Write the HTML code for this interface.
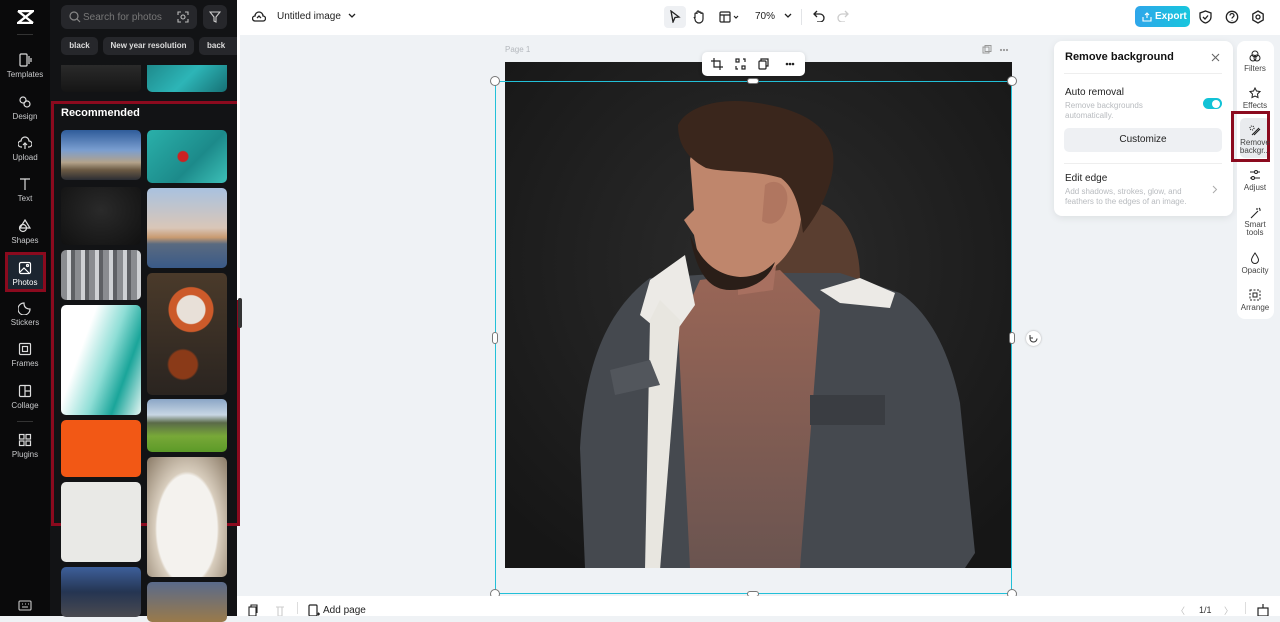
<!DOCTYPE html>
<html><head><meta charset="utf-8"><style>
*{box-sizing:border-box;margin:0;padding:0}
body{width:1280px;height:616px;overflow:hidden;font-family:"Liberation Sans",sans-serif;background:#eff2f5;position:relative}
.abs{position:absolute}
.rail{left:0;top:0;width:50px;height:616px;background:#0a0a0b}
.ri{position:absolute;left:0;width:50px;text-align:center;color:#c9cacc;font-size:8px}
.ri svg{display:block;margin:0 auto 3px}
.panel{left:50px;top:0;width:187px;height:616px;background:#121315}
.th{position:absolute;border-radius:5px;overflow:hidden}
.tb{position:absolute;color:#444;font-size:8px;text-align:center;width:40px}
.tb svg{display:block;margin:0 auto 2px}
</style></head><body>
<div class="abs rail">
 <svg class="abs" style="left:17px;top:10px" width="17" height="14" viewBox="0 0 17 14"><path d="M1 1h15L1 13h15M1 1l15 12" stroke="#fff" stroke-width="2.4" fill="none"/></svg>
 <div class="abs" style="left:17px;top:34px;width:16px;height:1px;background:#333"></div>
 <div class="ri" style="top:53px"><svg width="14" height="14" viewBox="0 0 14 14" fill="none" stroke="#ddd" stroke-width="1.2"><rect x="2" y="1" width="7" height="12" rx="1"/><path d="M11 3v8M13 5v4"/></svg>Templates</div>
 <div class="ri" style="top:95px"><svg width="14" height="14" viewBox="0 0 14 14" fill="none" stroke="#ddd" stroke-width="1.2"><circle cx="5" cy="5" r="3"/><circle cx="9" cy="9" r="3"/></svg>Design</div>
 <div class="ri" style="top:136px"><svg width="14" height="14" viewBox="0 0 14 14" fill="none" stroke="#ddd" stroke-width="1.2"><path d="M4 11H3a3 3 0 010-6 4 4 0 018 0 3 3 0 010 6h-1M7 13V7M5 9l2-2 2 2"/></svg>Upload</div>
 <div class="ri" style="top:177px"><svg width="14" height="14" viewBox="0 0 14 14" fill="none" stroke="#ddd" stroke-width="1.2"><path d="M2 2h10M7 2v11"/></svg>Text</div>
 <div class="ri" style="top:219px"><svg width="14" height="14" viewBox="0 0 14 14" fill="none" stroke="#ddd" stroke-width="1.2"><path d="M7 1l5 8H2z"/><circle cx="5" cy="9" r="3.5"/></svg>Shapes</div>
 <div class="abs" style="left:5px;top:252px;width:41px;height:40px;border:3px solid #8b0a1e;background:#1c2530"></div>
 <div class="ri" style="top:261px;color:#fff"><svg width="14" height="14" viewBox="0 0 14 14" fill="none" stroke="#fff" stroke-width="1.2"><rect x="1.5" y="1.5" width="11" height="11" rx="1.5"/><path d="M2 11l4-4 5 5"/><circle cx="9.5" cy="4.5" r="1"/></svg>Photos</div>
 <div class="ri" style="top:301px"><svg width="14" height="14" viewBox="0 0 14 14" fill="none" stroke="#ddd" stroke-width="1.2"><path d="M12 8A6 6 0 116 2c0 4 2 6 6 6z"/></svg>Stickers</div>
 <div class="ri" style="top:342px"><svg width="14" height="14" viewBox="0 0 14 14" fill="none" stroke="#ddd" stroke-width="1.2"><rect x="1.5" y="1.5" width="11" height="11" rx="1"/><rect x="4.5" y="4.5" width="5" height="5"/></svg>Frames</div>
 <div class="ri" style="top:384px"><svg width="14" height="14" viewBox="0 0 14 14" fill="none" stroke="#ddd" stroke-width="1.2"><rect x="1.5" y="1.5" width="11" height="11" rx="1"/><path d="M7 1.5v11M7 7h5.5"/></svg>Collage</div>
 <div class="abs" style="left:17px;top:421px;width:16px;height:1px;background:#333"></div>
 <div class="ri" style="top:433px"><svg width="14" height="14" viewBox="0 0 14 14" fill="none" stroke="#ddd" stroke-width="1.2"><rect x="1.5" y="1.5" width="4.5" height="4.5"/><rect x="8" y="1.5" width="4.5" height="4.5"/><rect x="1.5" y="8" width="4.5" height="4.5"/><rect x="8" y="8" width="4.5" height="4.5"/></svg>Plugins</div>
 <svg class="abs" style="left:18px;top:600px" width="14" height="12" viewBox="0 0 14 12" fill="none" stroke="#ccc" stroke-width="1.1"><rect x="1" y="1" width="12" height="9" rx="1"/><path d="M4 7h6M4 4h1M7 4h1M10 4h1"/></svg>
</div>
<div class="abs panel">
 <div class="abs" style="left:11px;top:5px;width:136px;height:24px;background:#26272b;border-radius:6px"></div>
 <svg class="abs" style="left:19px;top:11px" width="12" height="12" viewBox="0 0 12 12" fill="none" stroke="#888" stroke-width="1.2"><circle cx="5" cy="5" r="4"/><path d="M8 8l3 3"/></svg>
 <div class="abs" style="left:33px;top:12px;color:#777;font-size:10px">Search for photos</div>
 <svg class="abs" style="left:127px;top:11px" width="12" height="12" viewBox="0 0 12 12" fill="none" stroke="#bbb" stroke-width="1.1"><path d="M1 4V1h3M8 1h3v3M11 8v3H8M4 11H1V8"/><circle cx="6" cy="6" r="2"/></svg>
 <div class="abs" style="left:153px;top:5px;width:24px;height:24px;background:#26272b;border-radius:6px"></div>
 <svg class="abs" style="left:159px;top:11px" width="12" height="12" viewBox="0 0 12 12" fill="none" stroke="#ccc" stroke-width="1.1"><path d="M1 1h10L7 6v5L5 10V6z"/></svg>
 <div class="abs" style="left:11px;top:37px;width:37px;height:18px;background:#26272b;border-radius:5px;color:#ddd;font-size:8px;font-weight:bold;text-align:center;line-height:18px">black</div>
 <div class="abs" style="left:53px;top:37px;width:91px;height:18px;background:#26272b;border-radius:5px;color:#ddd;font-size:8px;font-weight:bold;text-align:center;line-height:18px">New year resolution</div>
 <div class="abs" style="left:149px;top:37px;width:38px;height:18px;background:#26272b;border-radius:5px 0 0 5px;color:#ddd;font-size:8px;font-weight:bold;line-height:18px;padding-left:8px;overflow:hidden">back</div>
 <div class="th" style="left:11px;top:65px;width:80px;height:27px;background:linear-gradient(#2a2a2a,#151515);border-radius:0 0 5px 5px"></div>
 <div class="th" style="left:97px;top:65px;width:80px;height:27px;background:linear-gradient(135deg,#1e8a8c,#2db5b7,#167074);border-radius:0 0 5px 5px"></div>
 <div class="abs" style="left:1px;top:101px;width:189px;height:425px;border:3px solid #8b0a1e"></div>
 <div class="abs" style="left:11px;top:107px;color:#fff;font-size:11px;font-weight:bold">Recommended</div>
 <div class="th" style="left:11px;top:130px;width:80px;height:50px;background:linear-gradient(#2f5c9a 0%,#7a9ed0 40%,#b3a28a 65%,#6b5a44 80%,#2b2d33)"></div>
 <div class="th" style="left:11px;top:187px;width:80px;height:58px;background:radial-gradient(ellipse at 50% 40%,#2a2a2a,#111)"></div>
 <div class="th" style="left:11px;top:250px;width:80px;height:50px;background:repeating-linear-gradient(90deg,#8a8c90 0 6px,#cfd1d4 6px 10px,#5e6064 10px 14px)"></div>
 <div class="th" style="left:11px;top:305px;width:80px;height:110px;background:linear-gradient(110deg,#fff 30%,#8fded6 55%,#1aa59a 75%,#e6f6f4)"></div>
 <div class="th" style="left:11px;top:420px;width:80px;height:57px;background:#f25815"></div>
 <div class="th" style="left:11px;top:482px;width:80px;height:80px;background:#e9e9e6"></div>
 <div class="th" style="left:11px;top:567px;width:80px;height:50px;background:linear-gradient(#3d5f9a,#253552 50%,#4a4a50)"></div>
 <div class="th" style="left:97px;top:130px;width:80px;height:53px;background:radial-gradient(circle at 45% 50%,#c22 0 5px,transparent 6px),linear-gradient(135deg,#2ab0aa,#1c8a8a 60%,#3dc0b8)"></div>
 <div class="th" style="left:97px;top:188px;width:80px;height:80px;background:linear-gradient(#a9c2e0 0%,#d9c6b8 50%,#c89a70 62%,#5a6a80 70%,#3a5a88 100%)"></div>
 <div class="th" style="left:97px;top:273px;width:80px;height:122px;background:radial-gradient(circle at 55% 30%,#e8e0d8 0 14px,#cc5a2a 15px 22px,transparent 23px),radial-gradient(circle at 45% 75%,#8a3a18 0 14px,transparent 16px),linear-gradient(#4a3a2a,#2a2420)"></div>
 <div class="th" style="left:97px;top:399px;width:80px;height:53px;background:linear-gradient(#8aa6c6 0%,#c8d6e4 30%,#5a6a48 45%,#78a838 70%,#5c9a28)"></div>
 <div class="th" style="left:97px;top:457px;width:80px;height:120px;background:radial-gradient(ellipse at 50% 60%,#f4f2ee 0 30px,#d8cdbd 32px,#8a7a66)"></div>
 <div class="th" style="left:97px;top:582px;width:80px;height:40px;background:linear-gradient(#5a6a8a,#9a7a4a)"></div>
 <div class="abs" style="left:187px;top:0;width:3px;height:300px;background:#fff"></div>
 <div class="abs" style="left:188px;top:298px;width:4px;height:30px;background:#333;border-radius:2px"></div>
</div>
<!-- top bar -->
<div class="abs" style="left:237px;top:0;width:1043px;height:35px;background:#fff"></div>
<svg class="abs" style="left:252px;top:10px" width="14" height="13" viewBox="0 0 14 13" fill="none" stroke="#222" stroke-width="1.3"><path d="M4 11H3a2.5 2.5 0 010-5 4 4 0 018 0 2.5 2.5 0 010 5H4z"/><path d="M5 8l2-2 2 2"/></svg>
<div class="abs" style="left:277px;top:11px;font-size:10px;color:#222">Untitled image</div>
<svg class="abs" style="left:348px;top:13px" width="8" height="6" viewBox="0 0 8 6"><path d="M1 1l3 3 3-3" stroke="#222" stroke-width="1.3" fill="none"/></svg>
<div class="abs" style="left:664px;top:6px;width:22px;height:22px;background:#eef0f3;border-radius:4px"></div>
<svg class="abs" style="left:669px;top:10px" width="12" height="13" viewBox="0 0 12 13"><path d="M2 1l8 6-4 .5L4 12z" stroke="#222" stroke-width="1.3" fill="none"/></svg>
<svg class="abs" style="left:692px;top:10px" width="13" height="14" viewBox="0 0 13 14" fill="none" stroke="#222" stroke-width="1.2"><path d="M3 8V4a1 1 0 012 0V2a1 1 0 012 0v1a1 1 0 012 0v1a1 1 0 012 0v5a4 4 0 01-8 0L2 7"/></svg>
<svg class="abs" style="left:719px;top:11px" width="22" height="12" viewBox="0 0 22 12" fill="none" stroke="#222" stroke-width="1.2"><rect x="1" y="1" width="10" height="10" rx="1"/><path d="M1 4h10M5 4v7M15 5l2 2 2-2"/></svg>
<div class="abs" style="left:755px;top:11px;font-size:10px;color:#222">70%</div>
<svg class="abs" style="left:784px;top:13px" width="8" height="6" viewBox="0 0 8 6"><path d="M1 1l3 3 3-3" stroke="#222" stroke-width="1.3" fill="none"/></svg>
<div class="abs" style="left:801px;top:9px;width:1px;height:16px;background:#e2e4e7"></div>
<svg class="abs" style="left:813px;top:10px" width="12" height="12" viewBox="0 0 12 12" fill="none" stroke="#222" stroke-width="1.3"><path d="M4 1L1 4l3 3M1 4h6a4 4 0 010 8H4"/></svg>
<svg class="abs" style="left:837px;top:10px" width="12" height="12" viewBox="0 0 12 12" fill="none" stroke="#ccc" stroke-width="1.3"><path d="M8 1l3 3-3 3M11 4H5a4 4 0 000 8h3"/></svg>
<div class="abs" style="left:1135px;top:6px;width:55px;height:21px;border-radius:5px;background:linear-gradient(90deg,#2fa6ea,#17c6dd);color:#fff;font-size:10px;font-weight:bold;line-height:21px;padding-left:20px">Export</div>
<svg class="abs" style="left:1142px;top:12px" width="10" height="10" viewBox="0 0 10 10" fill="none" stroke="#fff" stroke-width="1.1"><path d="M1 5v4h8V5M5 6V1M3 3l2-2 2 2"/></svg>
<svg class="abs" style="left:1199px;top:10px" width="13" height="14" viewBox="0 0 13 14" fill="none" stroke="#222" stroke-width="1.3"><path d="M6.5 1L12 3v4c0 3-3 5.5-5.5 6C4 12.5 1 10 1 7V3z"/><path d="M4 7l2 2 3-3.5"/></svg>
<svg class="abs" style="left:1225px;top:10px" width="14" height="14" viewBox="0 0 14 14" fill="none" stroke="#222" stroke-width="1.3"><circle cx="7" cy="7" r="5.7"/><path d="M5 5.5a2 2 0 114 0c0 1.5-2 1.5-2 3M7 10.5v.5"/></svg>
<svg class="abs" style="left:1251px;top:10px" width="14" height="14" viewBox="0 0 14 14" fill="none" stroke="#222" stroke-width="1.3"><path d="M7 1l5.2 3v6L7 13 1.8 10V4z"/><circle cx="7" cy="7" r="2"/></svg>
<!-- canvas -->
<div class="abs" style="left:505px;top:45px;font-size:8px;color:#b4b8bd">Page 1</div>
<svg class="abs" style="left:982px;top:45px" width="30" height="10" viewBox="0 0 30 10" fill="none" stroke="#999" stroke-width="1"><rect x="1" y="2" width="6" height="6"/><rect x="3" y="0.5" width="6" height="6"/><circle cx="19" cy="5" r=".6" fill="#999"/><circle cx="22" cy="5" r=".6" fill="#999"/><circle cx="25" cy="5" r=".6" fill="#999"/></svg>
<svg class="abs" style="left:505px;top:62px" width="507" height="506" viewBox="505 62 507 506">
 <defs><radialGradient id="bg" cx="50%" cy="40%" r="70%"><stop offset="0" stop-color="#2c2c2c"/><stop offset="1" stop-color="#161616"/></radialGradient>
 <linearGradient id="hd" x1="0" y1="0" x2="0" y2="1"><stop offset="0" stop-color="#9a6656"/><stop offset="1" stop-color="#6a5450"/></linearGradient></defs>
 <rect x="505" y="62" width="507" height="506" fill="url(#bg)"/>
 <path d="M800 200c35 0 60 30 60 80l-10 30-90-20z" fill="#5a3e30"/>
 <path d="M585 568l-5-120c5-90 30-140 70-170l80-5 110 0 60 20c30 20 50 60 60 110l15 150-10 15z" fill="#45494f"/>
 <path d="M700 280l80-10 40 40-20 258H690l-12-240z" fill="url(#hd)"/>
 <path d="M650 280l35-25 10 50-25 35-30-25zM820 290l40-12 35 15-5 15-50-5z" fill="#eceae6"/>
 <path d="M660 300l20 20-20 250h-15l5-250z" fill="#e8e6e0"/>
 <path d="M810 395h75v30h-75z" fill="#3a3d42"/>
 <path d="M610 370l40-10 10 25-45 10z" fill="#52565c"/>
 <path d="M738 250l40 0 -5 40-35 5z" fill="#a87060"/>
 <path d="M690 160c2-10 10-15 20-15l80 10c15 15 15 45 10 70-5 25-25 50-55 55-25 3-40-10-48-30l-3-15-10-15 10-10z" fill="#bf866c"/>
 <path d="M690 235c10 25 25 40 50 42 15 0 25-5 35-15-5 15-20 28-45 28-25 0-35-25-40-55z" fill="#2a1e18"/>
 <path d="M678 125c10-20 45-28 80-22 40 6 70 20 75 50 3 25-10 55-30 80-3-25-8-45-22-55-25-8-55-5-75-10-15-8-28-20-28-43z" fill="#3a261c"/>
 <path d="M765 185c10-8 25 0 22 18-3 18-15 25-25 18z" fill="#b07660"/>
</svg>
<div class="abs" style="left:495px;top:81px;width:517px;height:513px;border:1.5px solid #22c0d8"></div>
<div class="abs" style="left:490px;top:76px;width:10px;height:10px;border-radius:50%;background:#fff;border:1px solid #777"></div>
<div class="abs" style="left:1007px;top:76px;width:10px;height:10px;border-radius:50%;background:#fff;border:1px solid #777"></div>
<div class="abs" style="left:490px;top:589px;width:10px;height:10px;border-radius:50%;background:#fff;border:1px solid #777"></div>
<div class="abs" style="left:1007px;top:589px;width:10px;height:10px;border-radius:50%;background:#fff;border:1px solid #777"></div>
<div class="abs" style="left:747px;top:78px;width:12px;height:6px;border-radius:3px;background:#fff;border:1px solid #777"></div>
<div class="abs" style="left:747px;top:591px;width:12px;height:6px;border-radius:3px;background:#fff;border:1px solid #777"></div>
<div class="abs" style="left:492px;top:332px;width:6px;height:12px;border-radius:3px;background:#fff;border:1px solid #777"></div>
<div class="abs" style="left:1009px;top:332px;width:6px;height:12px;border-radius:3px;background:#fff;border:1px solid #777"></div>
<div class="abs" style="left:1026px;top:331px;width:15px;height:15px;border-radius:50%;background:#fff;box-shadow:0 0 2px #aaa"></div>
<svg class="abs" style="left:1029px;top:334px" width="9" height="9" viewBox="0 0 9 9" fill="none" stroke="#333" stroke-width="1"><path d="M8 4.5A3.5 3.5 0 111 4.5M1 1v3h3"/></svg>
<div class="abs" style="left:702px;top:52px;width:103px;height:24px;background:#fff;border-radius:5px;box-shadow:0 1px 4px rgba(0,0,0,.15)"></div>
<svg class="abs" style="left:711px;top:58px" width="90" height="12" viewBox="0 0 90 12" fill="none" stroke="#222" stroke-width="1.2"><path d="M3 0v9h9M0 3h9v9"/><rect x="25" y="1" width="3" height="3"/><rect x="31" y="8" width="3" height="3"/><path d="M32 1h2v3M25 8v3h2"/><rect x="48" y="3" width="7" height="8" rx="1"/><path d="M50 3V1h7v7h-2"/><circle cx="76" cy="6" r=".7" fill="#222"/><circle cx="79" cy="6" r=".7" fill="#222"/><circle cx="82" cy="6" r=".7" fill="#222"/></svg>
<!-- bottom bar -->
<div class="abs" style="left:237px;top:596px;width:1043px;height:20px;background:#fff"></div>
<svg class="abs" style="left:248px;top:604px" width="44" height="12" viewBox="0 0 44 12" fill="none" stroke-width="1.1"><rect x="1" y="3" width="7" height="9" stroke="#222"/><path d="M3 3V1h6v8" stroke="#222"/><path d="M28 3h8M30 3v9h4V3" stroke="#ccc"/></svg>
<div class="abs" style="left:297px;top:602px;width:1px;height:12px;background:#ddd"></div>
<svg class="abs" style="left:308px;top:604px" width="12" height="12" viewBox="0 0 12 12" fill="none" stroke="#222" stroke-width="1.2"><rect x="1" y="1" width="8" height="11" rx="1"/><path d="M9 10h3M10.5 8.5v3"/></svg>
<div class="abs" style="left:323px;top:605px;font-size:10px;color:#222">Add page</div>
<div class="abs" style="left:1176px;top:604px;font-size:9px;color:#bbb">〈</div>
<div class="abs" style="left:1199px;top:605px;font-size:9px;color:#333">1/1</div>
<div class="abs" style="left:1224px;top:604px;font-size:9px;color:#bbb">〉</div>
<div class="abs" style="left:1245px;top:602px;width:1px;height:12px;background:#ddd"></div>
<svg class="abs" style="left:1257px;top:603px" width="12" height="13" viewBox="0 0 12 13" fill="none" stroke="#222" stroke-width="1.2"><rect x="1" y="5" width="10" height="8"/><path d="M6 1v4"/></svg>
<!-- remove bg panel -->
<div class="abs" style="left:1054px;top:41px;width:179px;height:175px;background:#fff;border-radius:8px;box-shadow:0 2px 8px rgba(0,0,0,.08)"></div>
<div class="abs" style="left:1065px;top:51px;font-size:11px;font-weight:bold;color:#111">Remove background</div>
<svg class="abs" style="left:1211px;top:53px" width="9" height="9" viewBox="0 0 9 9"><path d="M1 1l7 7M8 1L1 8" stroke="#666" stroke-width="1.1"/></svg>
<div class="abs" style="left:1064px;top:73px;width:158px;height:1px;background:#eee"></div>
<div class="abs" style="left:1065px;top:87px;font-size:10px;color:#222">Auto removal</div>
<div class="abs" style="left:1065px;top:101px;font-size:8px;color:#b8bbbf;line-height:10px">Remove backgrounds<br>automatically.</div>
<div class="abs" style="left:1203px;top:98px;width:19px;height:11px;border-radius:6px;background:#12c2d6"></div>
<div class="abs" style="left:1212px;top:99.5px;width:8px;height:8px;border-radius:50%;background:#fff"></div>
<div class="abs" style="left:1064px;top:128px;width:158px;height:24px;border-radius:5px;background:#eef0f3;font-size:10px;color:#222;text-align:center;line-height:24px">Customize</div>
<div class="abs" style="left:1064px;top:163px;width:158px;height:1px;background:#eee"></div>
<div class="abs" style="left:1065px;top:173px;font-size:10px;color:#222">Edit edge</div>
<div class="abs" style="left:1065px;top:187px;font-size:8px;color:#b8bbbf;line-height:10px">Add shadows, strokes, glow, and<br>feathers to the edges of an image.</div>
<svg class="abs" style="left:1212px;top:185px" width="6" height="9" viewBox="0 0 6 9"><path d="M1 1l3.5 3.5L1 8" stroke="#aaa" stroke-width="1" fill="none"/></svg>
<!-- right toolbar -->
<div class="abs" style="left:1237px;top:41px;width:37px;height:278px;background:#fff;border-radius:8px"></div>
<div class="abs" style="left:1240px;top:118px;width:30px;height:40px;background:#e9ebee;border-radius:5px"></div>
<div class="abs" style="left:1231px;top:111px;width:39px;height:51px;border:3px solid #8b0a1e"></div>
<div class="tb" style="left:1235px;top:50px"><svg width="12" height="12" viewBox="0 0 12 12" fill="none" stroke="#222" stroke-width="1"><circle cx="6" cy="4" r="3"/><circle cx="4" cy="8" r="3"/><circle cx="8" cy="8" r="3"/></svg>Filters</div>
<div class="tb" style="left:1235px;top:87px"><svg width="12" height="12" viewBox="0 0 12 12" fill="none" stroke="#222" stroke-width="1"><path d="M6 1l1.5 3 3.5.5-2.5 2.5.5 3.5L6 9l-3 1.5.5-3.5L1 4.5 4.5 4z"/></svg>Effects</div>
<div class="tb" style="left:1235px;top:125px;line-height:8px"><svg width="12" height="12" viewBox="0 0 12 12" fill="none" stroke="#222" stroke-width="1.1"><path d="M3 10l7-7M5 10l6-6" /><circle cx="3" cy="3" r="2" stroke-dasharray="1 1"/></svg>Remove<br>backgr...</div>
<div class="tb" style="left:1235px;top:169px"><svg width="12" height="12" viewBox="0 0 12 12" fill="none" stroke="#222" stroke-width="1"><path d="M1 3h10M1 9h10"/><circle cx="7" cy="3" r="1.5" fill="#fff"/><circle cx="4" cy="9" r="1.5" fill="#fff"/></svg>Adjust</div>
<div class="tb" style="left:1235px;top:207px;line-height:8px"><svg width="12" height="12" viewBox="0 0 12 12" fill="none" stroke="#222" stroke-width="1.1"><path d="M2 11l7-7M8 1v2M10 3h2M10 1l1 1"/></svg>Smart<br>tools</div>
<div class="tb" style="left:1235px;top:252px"><svg width="12" height="12" viewBox="0 0 12 12" fill="none" stroke="#222" stroke-width="1"><path d="M6 1C4 4 2.5 6 2.5 8a3.5 3.5 0 007 0C9.5 6 8 4 6 1z"/></svg>Opacity</div>
<div class="tb" style="left:1235px;top:289px"><svg width="12" height="12" viewBox="0 0 12 12" fill="none" stroke="#222" stroke-width="1"><rect x="1" y="1" width="10" height="10" stroke-dasharray="2 1.5"/><rect x="4" y="4" width="4" height="4"/></svg>Arrange</div>
</body></html>
